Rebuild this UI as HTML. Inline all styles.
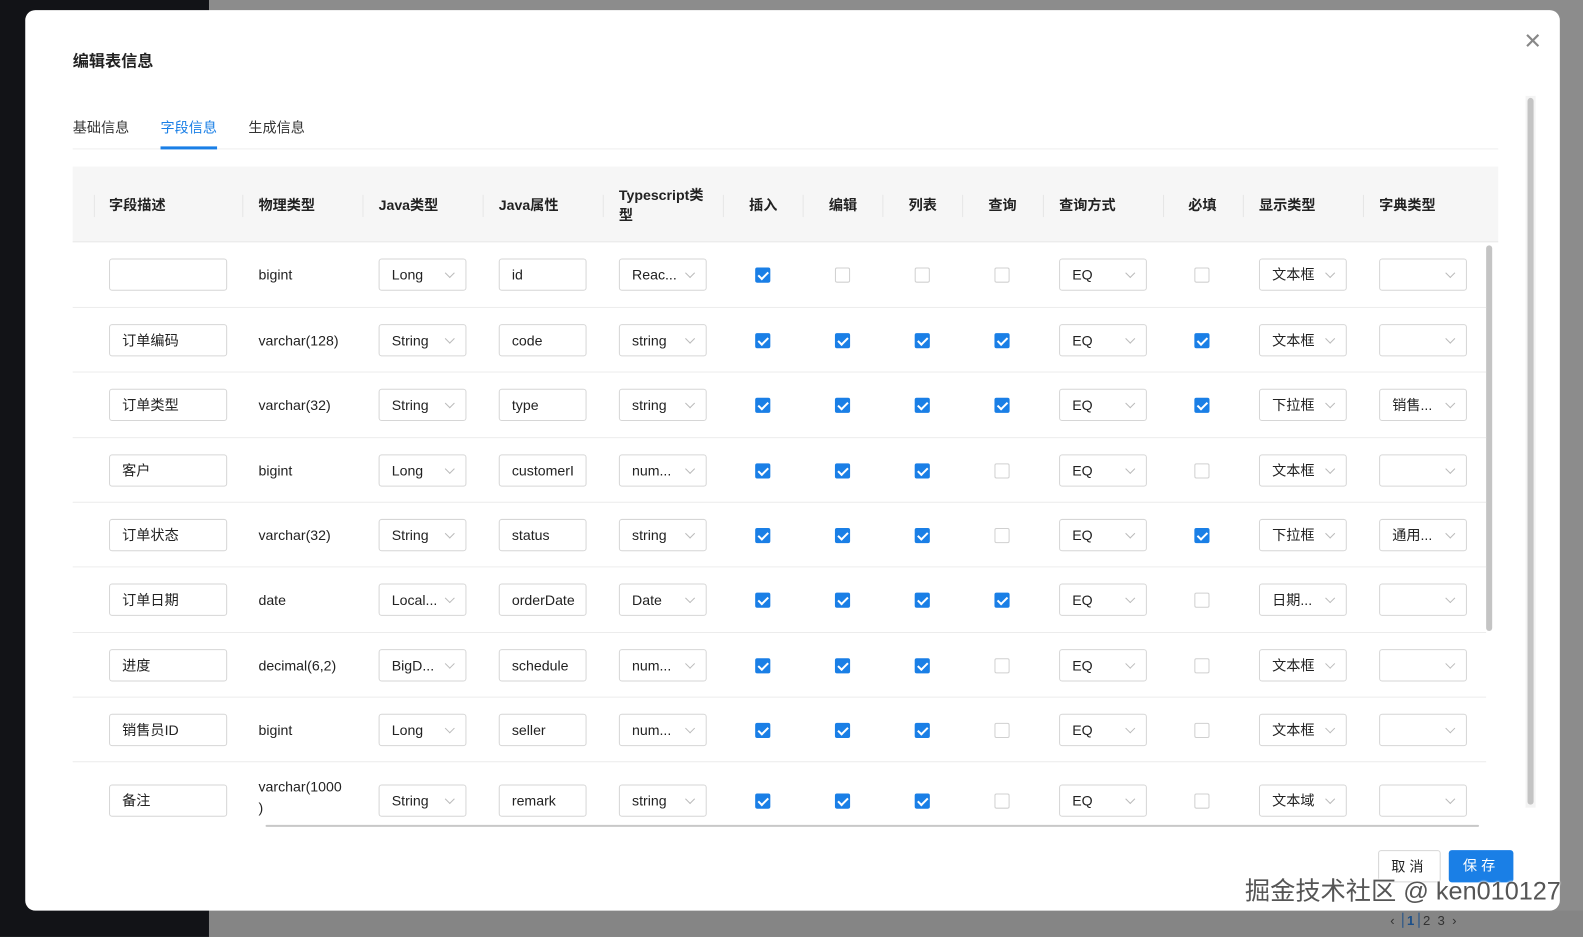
<!DOCTYPE html>
<html><head><meta charset="utf-8"><style>
*{box-sizing:border-box;margin:0;padding:0}
body{width:1583px;height:928px;overflow:hidden;background:#8c8c8c;font-family:"Liberation Sans","Noto Sans CJK SC",sans-serif;font-size:14px;color:#222;position:relative}
#w{position:absolute;left:0;top:0;width:1568px;height:920px;transform:scale(1.0096);transform-origin:0 0}
.side{position:absolute;left:0;top:0;width:207px;height:928px;background:#121317}
.bot{position:absolute;left:207px;top:902px;width:1376px;height:26px;background:#858585}
.modal{position:absolute;left:25px;top:10px;width:1520px;height:892px;background:#fff;border-radius:10px}
.abs{position:absolute}
.title{left:47px;top:37px;font-size:16px;font-weight:bold;color:#222}
.close{left:1484px;top:18px;font-size:22px;color:#888}
.tab{top:106px;font-size:14px;color:#333}
.tabline{left:47px;top:137px;width:1412px;height:1px;background:#eee}
.ink{left:134px;top:135px;width:56px;height:3px;background:#1a7fe6}
.thead{left:47px;top:155px;width:1412px;height:75px;background:#f6f6f6;border-bottom:1px solid #e8e8e8}
.th{position:absolute;top:0;height:75px;display:flex;align-items:center;font-weight:bold;font-size:14px;color:#222}
.sep{position:absolute;top:28px;width:1px;height:22px;background:#e6e6e6}
.row{position:absolute;left:47px;width:1400px;border-bottom:1px solid #ececec}
.row>*{position:absolute}
.in,.sel{top:16px;height:32px;border:1px solid #d6d6d6;border-radius:3px;padding-left:12px;line-height:30px;font-size:14px;color:#222;white-space:nowrap;overflow:hidden}
.in{width:117px}
.sel{width:87px}
.sel:after{content:"";position:absolute;right:12px;top:10px;width:6px;height:6px;border-right:1px solid #bbb;border-bottom:1px solid #bbb;transform:rotate(45deg)}
.txt{top:0;height:64px;line-height:64px;font-size:14px}
.cb{top:25px;width:15px;height:15px;border:1px solid #d0d0d0;border-radius:2px;background:#fff}
.cb.on{background:#1a7fe6;border-color:#1a7fe6}
.cb.on:after{content:"";position:absolute;left:4px;top:1px;width:4px;height:8px;border-right:2px solid #fff;border-bottom:2px solid #fff;transform:rotate(45deg)}
.c1{left:36px}.c2{left:184px}.c3{left:303px}.c4{left:422px}.c5{left:541px}
.k1{left:676px}.k2{left:755px}.k3{left:834px}.k4{left:913px}.c10{left:977px}.k5{left:1111px}.c12{left:1175px}.c13{left:1294px}
.btn{top:832px;height:32px;border-radius:3px;font-size:14px;line-height:30px;text-align:center;letter-spacing:4px}
</style></head><body><div id="w">
<div class="side"></div>
<div class="bot"><span class="abs" style="left:1170px;top:2px;color:#333;font-size:13px;white-space:nowrap">‹ &nbsp;<b style="color:#1a4f8a;border-left:1px solid #1a4f8a;border-right:1px solid #1a4f8a;padding:0 4px">1</b> 2 &nbsp;3 &nbsp;›</span></div>
<div class="modal">
<div class="abs title">编辑表信息</div>
<div class="abs close">✕</div>
<div class="abs tab" style="left:47px">基础信息</div>
<div class="abs tab" style="left:134px;color:#1a7fe6">字段信息</div>
<div class="abs tab" style="left:221px">生成信息</div>
<div class="abs tabline"></div><div class="abs ink"></div>
<div class="abs" style="left:1486px;top:85px;width:10px;height:705px;background:#f4f4f4"><div style="margin:2px auto;width:6px;height:700px;background:#c4c4c4;border-radius:3px"></div></div>
<div class="abs thead">
<div class="sep" style="left:21px"></div>
<div class="th" style="left:36px">字段描述</div><div class="sep" style="left:168px"></div>
<div class="th" style="left:184px">物理类型</div><div class="sep" style="left:287px"></div>
<div class="th" style="left:303px">Java类型</div><div class="sep" style="left:406px"></div>
<div class="th" style="left:422px">Java属性</div><div class="sep" style="left:525px"></div>
<div class="th" style="left:541px;width:95px;line-height:20px">Typescript类型</div><div class="sep" style="left:644px"></div>
<div class="th" style="left:670px">插入</div><div class="sep" style="left:723px"></div>
<div class="th" style="left:749px">编辑</div><div class="sep" style="left:802px"></div>
<div class="th" style="left:828px">列表</div><div class="sep" style="left:881px"></div>
<div class="th" style="left:907px">查询</div><div class="sep" style="left:961px"></div>
<div class="th" style="left:977px">查询方式</div><div class="sep" style="left:1080px"></div>
<div class="th" style="left:1105px">必填</div><div class="sep" style="left:1159px"></div>
<div class="th" style="left:1175px">显示类型</div><div class="sep" style="left:1278px"></div>
<div class="th" style="left:1294px">字典类型</div>
</div>
<div class="abs" style="left:1447px;top:233px;width:6px;height:382px;background:#c4c4c4;border-radius:3px"></div>

<div class="row" style="top:230px;height:65px"><div class="in c1"></div><div class="txt c2">bigint</div><div class="sel c3">Long</div><div class="in c4" style="width:87px">id</div><div class="sel c5">Reac...</div><div class="cb k1 on"></div><div class="cb k2"></div><div class="cb k3"></div><div class="cb k4"></div><div class="sel c10">EQ</div><div class="cb k5"></div><div class="sel c12">文本框</div><div class="sel c13"></div></div>
<div class="row" style="top:295px;height:64px"><div class="in c1">订单编码</div><div class="txt c2">varchar(128)</div><div class="sel c3">String</div><div class="in c4" style="width:87px">code</div><div class="sel c5">string</div><div class="cb k1 on"></div><div class="cb k2 on"></div><div class="cb k3 on"></div><div class="cb k4 on"></div><div class="sel c10">EQ</div><div class="cb k5 on"></div><div class="sel c12">文本框</div><div class="sel c13"></div></div>
<div class="row" style="top:359px;height:65px"><div class="in c1">订单类型</div><div class="txt c2">varchar(32)</div><div class="sel c3">String</div><div class="in c4" style="width:87px">type</div><div class="sel c5">string</div><div class="cb k1 on"></div><div class="cb k2 on"></div><div class="cb k3 on"></div><div class="cb k4 on"></div><div class="sel c10">EQ</div><div class="cb k5 on"></div><div class="sel c12">下拉框</div><div class="sel c13">销售...</div></div>
<div class="row" style="top:424px;height:64px"><div class="in c1">客户</div><div class="txt c2">bigint</div><div class="sel c3">Long</div><div class="in c4" style="width:87px">customerI</div><div class="sel c5">num...</div><div class="cb k1 on"></div><div class="cb k2 on"></div><div class="cb k3 on"></div><div class="cb k4"></div><div class="sel c10">EQ</div><div class="cb k5"></div><div class="sel c12">文本框</div><div class="sel c13"></div></div>
<div class="row" style="top:488px;height:64px"><div class="in c1">订单状态</div><div class="txt c2">varchar(32)</div><div class="sel c3">String</div><div class="in c4" style="width:87px">status</div><div class="sel c5">string</div><div class="cb k1 on"></div><div class="cb k2 on"></div><div class="cb k3 on"></div><div class="cb k4"></div><div class="sel c10">EQ</div><div class="cb k5 on"></div><div class="sel c12">下拉框</div><div class="sel c13">通用...</div></div>
<div class="row" style="top:552px;height:65px"><div class="in c1">订单日期</div><div class="txt c2">date</div><div class="sel c3">Local...</div><div class="in c4" style="width:87px">orderDate</div><div class="sel c5">Date</div><div class="cb k1 on"></div><div class="cb k2 on"></div><div class="cb k3 on"></div><div class="cb k4 on"></div><div class="sel c10">EQ</div><div class="cb k5"></div><div class="sel c12">日期...</div><div class="sel c13"></div></div>
<div class="row" style="top:617px;height:64px"><div class="in c1">进度</div><div class="txt c2">decimal(6,2)</div><div class="sel c3">BigD...</div><div class="in c4" style="width:87px">schedule</div><div class="sel c5">num...</div><div class="cb k1 on"></div><div class="cb k2 on"></div><div class="cb k3 on"></div><div class="cb k4"></div><div class="sel c10">EQ</div><div class="cb k5"></div><div class="sel c12">文本框</div><div class="sel c13"></div></div>
<div class="row" style="top:681px;height:64px"><div class="in c1">销售员ID</div><div class="txt c2">bigint</div><div class="sel c3">Long</div><div class="in c4" style="width:87px">seller</div><div class="sel c5">num...</div><div class="cb k1 on"></div><div class="cb k2 on"></div><div class="cb k3 on"></div><div class="cb k4"></div><div class="sel c10">EQ</div><div class="cb k5"></div><div class="sel c12">文本框</div><div class="sel c13"></div></div>
<div class="row" style="top:745px;height:63px;border-bottom:none"><div class="in c1" style="top:22px">备注</div><div class="txt c2" style="top:14px;height:auto;line-height:21px">varchar(1000<br>)</div><div class="sel c3" style="top:22px">String</div><div class="in c4" style="width:87px;top:22px">remark</div><div class="sel c5" style="top:22px">string</div><div class="cb k1 on" style="top:31px"></div><div class="cb k2 on" style="top:31px"></div><div class="cb k3 on" style="top:31px"></div><div class="cb k4" style="top:31px"></div><div class="sel c10" style="top:22px">EQ</div><div class="cb k5" style="top:31px"></div><div class="sel c12" style="top:22px">文本域</div><div class="sel c13" style="top:22px"></div></div>
<div class="abs" style="left:238px;top:807px;width:1202px;height:2px;background:#c8c8c8;border-radius:1px"></div>
<div class="abs btn" style="left:1340px;width:62px;border:1px solid #d6d6d6;background:#fff;color:#222">取消</div>
<div class="abs btn" style="left:1410px;width:64px;background:#1a7fe6;color:#fff">保存</div>
<div class="abs" style="left:1208px;top:853px;font-size:25px;color:#555;white-space:nowrap;text-shadow:0 0 2px #fff,0 0 2px #fff">掘金技术社区 @ ken010127</div>
</div>
</div></body></html>
